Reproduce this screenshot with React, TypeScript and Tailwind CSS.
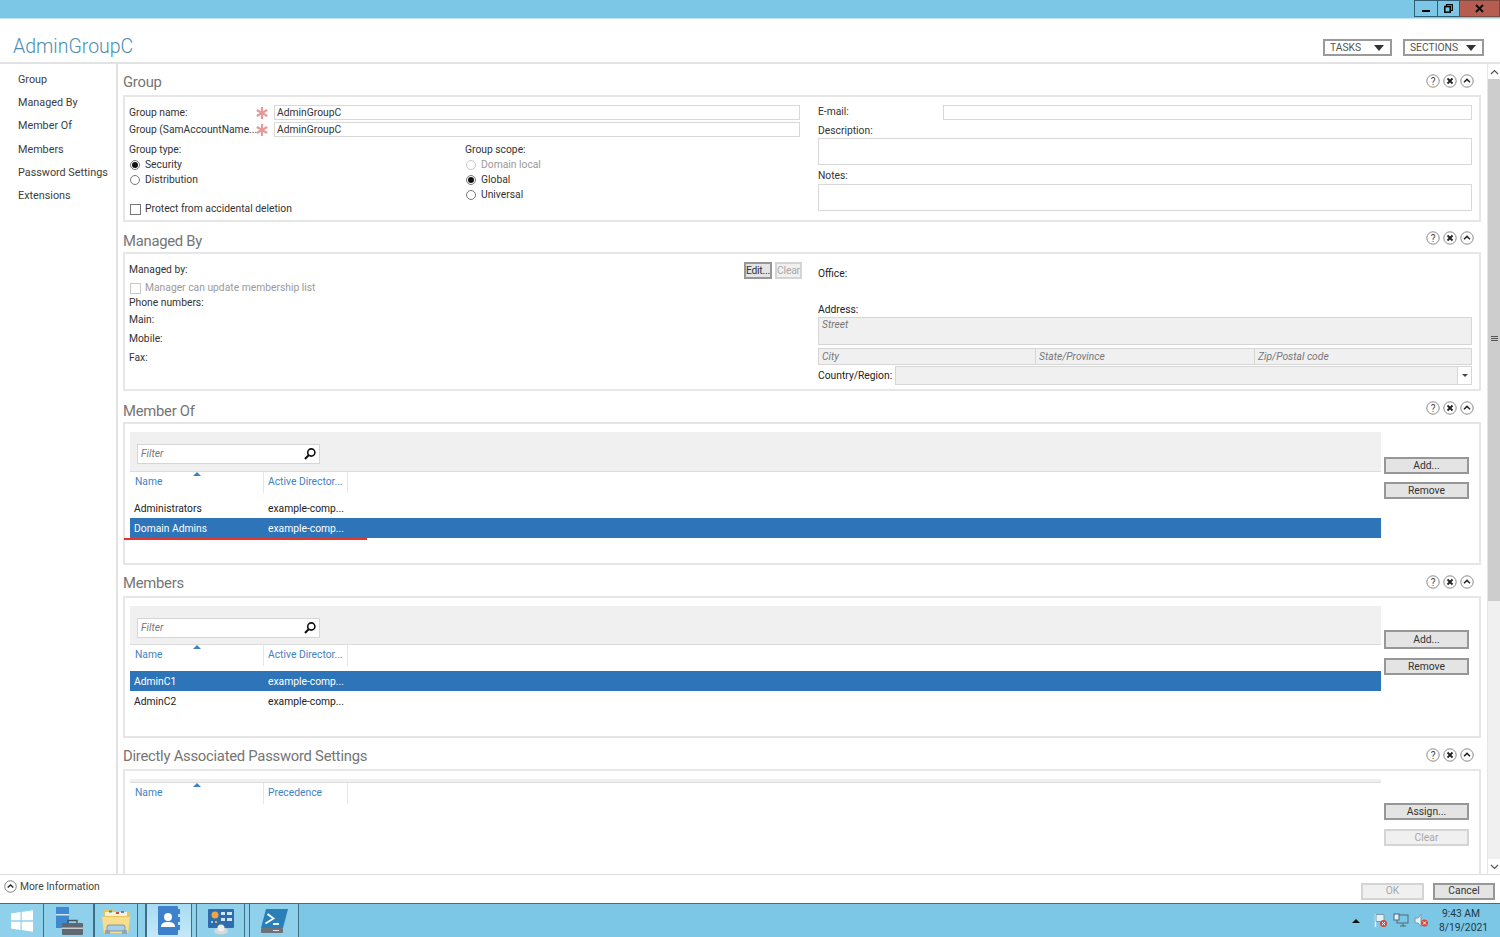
import React from "react";

const F = "font-['Roboto','Open_Sans',sans-serif]";

function CircleIcons() {
  return (
    <div className="flex gap-[3px] mr-[7px]">
      <svg width="14" height="14" viewBox="0 0 14 14"><circle cx="7" cy="7" r="6.2" fill="#fff" stroke="#8a8a8a" /><text x="7" y="10.500" fontSize="10" textAnchor="middle" fill="#444" fontFamily="Roboto">?</text></svg>
      <svg width="14" height="14" viewBox="0 0 14 14"><circle cx="7" cy="7" r="6.2" fill="#fff" stroke="#8a8a8a" /><path d="M4.500 4.500l5 5M9.500 4.500l-5 5" stroke="#222" strokeWidth="1.8" /></svg>
      <svg width="14" height="14" viewBox="0 0 14 14"><circle cx="7" cy="7" r="6.2" fill="#fff" stroke="#8a8a8a" /><path d="M4 8.200L7 5.400l3 2.800" stroke="#222" strokeWidth="1.5" fill="none" /></svg>
    </div>
  );
}

function Section({ title, h, children, gap, head, icons }: { title: string; h: string; children: React.ReactNode; gap: string; head: string; icons: string }) {
  return (
    <section className={gap}>
      <div className="h-[26px] flex items-center justify-between">
        <h2 className={`text-[14.8px] tracking-[-0.25px] leading-none text-[#757575] ${head}`}>{title}</h2>
        <div className={icons}><CircleIcons /></div>
      </div>
      <div className={`${h} border-2 border-[#e6e6e6] bg-white box-border`}>{children}</div>
    </section>
  );
}

function Req() {
  return (
    <svg width="12" height="12" viewBox="0 0 12 12" className="shrink-0">
      <path d="M6 0v12M0.800 3l10.400 6M11.200 3L0.800 9" stroke="#e59a9a" strokeWidth="2.2" />
    </svg>
  );
}

function Radio({ on, dis, label }: { on?: boolean; dis?: boolean; label: string }) {
  return (
    <div className={`h-[15px] flex items-center gap-[5px] ${dis ? "text-[#9a9a9a]" : ""}`}>
      <span className={`w-[10px] h-[10px] rounded-full border flex items-center justify-center bg-white ${dis ? "border-[#c8c8c8]" : "border-[#777]"}`}>
        {on && <span className="w-[6px] h-[6px] rounded-full bg-[#111]" />}
      </span>
      {label}
    </div>
  );
}

function Check({ label, dis }: { label: string; dis?: boolean }) {
  return (
    <div className={`flex items-center gap-[4px] ${dis ? "text-[#9a9a9a]" : ""}`}>
      <span className={`w-[11px] h-[11px] border bg-white ${dis ? "border-[#c8c8c8]" : "border-[#777]"}`} />
      {label}
    </div>
  );
}

function Btn({ label, className, dis }: { label: string; className: string; dis?: boolean }) {
  return (
    <div className={`flex items-center justify-center border-2 box-border whitespace-nowrap ${dis ? "border-[#d4d4d4] bg-[#f0f0f0] text-[#a8a8a8]" : "border-[#979797] bg-[#e4e4e4] text-[#333]"} ${className}`}>
      {label}
    </div>
  );
}

function Filter() {
  return (
    <div className="w-[183px] h-[20px] ml-[7px] border border-[#d6d6d6] bg-white flex items-center justify-between pl-[3px] pr-[2px] italic text-[#777]">
      Filter
      <svg width="14" height="14" viewBox="0 0 14 14"><circle cx="8.300" cy="5.500" r="3.600" fill="none" stroke="#111" strokeWidth="1.6" /><path d="M5.600 8.200L2 12" stroke="#111" strokeWidth="2" /></svg>
    </div>
  );
}

function ColHead({ a, b }: { a: string; b: string }) {
  return (
    <div className="flex h-[21px] text-[#3f82c4] whitespace-nowrap">
      <div className="relative w-[134px] pl-[5px] pb-[2px] flex items-center border-r border-[#e6e6e6]">
        {a}
        <span className="absolute left-[63px] top-0 w-0 h-0 border-x-[4px] border-x-transparent border-b-[4px] border-b-[#3f82c4]" />
      </div>
      <div className="w-[84px] pl-[4px] pb-[2px] flex items-center border-r border-[#e6e6e6]">{b}</div>
    </div>
  );
}

function Row({ name, sel }: { name: string; sel?: boolean }) {
  return (
    <div className={`flex h-[20px] items-center pt-[1px] ${sel ? "bg-[#2e74b8] text-white" : "text-[#222]"}`}>
      <span className="w-[138px] pl-[4px]">{name}</span>
      <span>example-comp...</span>
    </div>
  );
}

function Grid({ rows, sideTop, pad, toolH, add, rem, underline }: { rows: React.ReactNode; sideTop: string; pad: string; toolH: string; add: string; rem: string; underline?: boolean }) {
  return (
    <div className="flex h-full pt-[8px] pl-[5px]">
      <div className="relative w-[1251px]">
        <div className={`${toolH} bg-[#f0f0f0] border-b border-[#dcdcdc] flex items-center pt-[5px]`}>
          <Filter />
        </div>
        <ColHead a="Name" b="Active Director..." />
        <div className={pad}>{rows}</div>
        {underline && <div className="absolute left-[-6px] top-[106px] w-[243px] h-[2px] bg-[#e8352b]" />}
      </div>
      <div className={`ml-[3px] ${sideTop} flex flex-col`}>
        <Btn label="Add..." className={`w-[85px] ${add}`} />
        <Btn label="Remove" className={`w-[85px] ${rem}`} />
      </div>
    </div>
  );
}

function Input({ className, children }: { className: string; children?: React.ReactNode }) {
  return <div className={`border border-[#d8d8d8] bg-white box-border flex items-center pl-[2px] ${className}`}>{children}</div>;
}

function GreyCell({ label, className }: { label: string; className: string }) {
  return <div className={`h-[17px] bg-[#f0f0f0] border border-[#d6d6d6] box-border pl-[3px] flex items-center italic text-[#777] ${className}`}>{label}</div>;
}

function TaskSlot({ w, active, children }: { w: string; active?: boolean; children: React.ReactNode }) {
  return (
    <div className={`${w} h-full border-x border-[#3f6f86] flex items-center justify-center ${active ? "bg-gradient-to-b from-[#a9dcf2] to-[#c4e8f8]" : "bg-[#8fd0eb]"}`}>
      {children}
    </div>
  );
}

export default function App() {
  return (
    <div className={`${F} w-[1500px] h-[937px] overflow-hidden flex flex-col bg-white text-[10.3px] leading-[14px] text-[#333]`}>
      {/* title bar */}
      <div className="h-[19px] shrink-0 bg-[#7cc7e6] flex justify-end border-b border-[#bfe4f3]">
        <div className="w-[24px] h-[17px] bg-[#7cc7e6] border border-[#2f5d73] flex items-center justify-center">
          <span className="w-[8px] h-[2px] bg-black mt-[4px]" />
        </div>
        <div className="w-[22px] h-[17px] bg-[#7cc7e6] border-y border-r border-[#2f5d73] flex items-center justify-center">
          <svg width="9" height="9" viewBox="0 0 9 9"><path d="M2.500 2.500V.7h5.800v5.800H6.500" fill="none" stroke="#000" strokeWidth="1.2" /><rect x=".8" y="2.600" width="5.400" height="5.600" fill="none" stroke="#000" strokeWidth="1.5" /></svg>
        </div>
        <div className="w-[40px] h-[17px] bg-[#b65c50] border-y border-r border-[#7d4a42] flex items-center justify-center">
          <svg width="9" height="9" viewBox="0 0 9 9"><path d="M1 1l7 7M8 1L1 8" stroke="#111" strokeWidth="2" /></svg>
        </div>
      </div>

      {/* header */}
      <div className="h-[45px] shrink-0 flex items-end justify-between border-b-2 border-[#e2e2e2] pl-[13px] pr-[16px] pb-[2px]">
        <h1 className="text-[19.5px] leading-[26px] font-light text-[#4c8db0]">AdminGroupC</h1>
        <div className="flex gap-[11px] pb-[4px]">
          <div className="w-[69px] h-[17px] border-2 border-[#9a9a9a] box-border flex items-center justify-between pl-[5px] pr-[6px] text-[#555]">
            TASKS<span className="w-0 h-0 border-x-[5px] border-x-transparent border-t-[6px] border-t-[#333]" />
          </div>
          <div className="w-[81px] h-[17px] border-2 border-[#9a9a9a] box-border flex items-center justify-between pl-[5px] pr-[6px] text-[#555]">
            SECTIONS<span className="w-0 h-0 border-x-[5px] border-x-transparent border-t-[6px] border-t-[#333]" />
          </div>
        </div>
      </div>

      {/* body */}
      <div className="flex-1 min-h-0 flex">
        <nav className="w-[118px] shrink-0 border-r-2 border-[#e2e2e2] pl-[18px] pt-[4px] text-[10.8px] text-[#3d3d3d]">
          {["Group", "Managed By", "Member Of", "Members", "Password Settings", "Extensions"].map((s) => (
            <div key={s} className="h-[23.3px] flex items-center">{s}</div>
          ))}
        </nav>

        <main className="flex-1 min-w-0 overflow-hidden pl-[5px] pr-[6px] pt-[5px]">
          <Section gap="" head="mt-[1px]" icons="-mt-[3px]" title="Group" h="h-[127px]">
            <div className="flex pl-[4px] pt-[8px]">
              <div className="w-[671px]">
                <div className="flex items-center h-[15px]">
                  <span className="w-[127px]">Group name:</span><Req />
                  <Input className="ml-[6px] w-[526px] h-[15px]">AdminGroupC</Input>
                </div>
                <div className="flex items-center h-[15px] mt-[2px]">
                  <span className="w-[127px] whitespace-nowrap">Group (SamAccountName...</span><Req />
                  <Input className="ml-[6px] w-[526px] h-[15px]">AdminGroupC</Input>
                </div>
                <div className="flex mt-[5px]">
                  <div className="w-[336px]">
                    <div className="h-[15px] flex items-center">Group type:</div>
                    <div className="pl-[1px]">
                      <Radio on label="Security" />
                      <Radio label="Distribution" />
                    </div>
                    <div className="pl-[1px] mt-[15px]"><Check label="Protect from accidental deletion" /></div>
                  </div>
                  <div>
                    <div className="h-[15px] flex items-center">Group scope:</div>
                    <div className="pl-[1px]">
                      <Radio dis label="Domain local" />
                      <Radio on label="Global" />
                      <Radio label="Universal" />
                    </div>
                  </div>
                </div>
              </div>
              <div className="ml-[18px] w-[654px]">
                <div className="flex items-center h-[15px]">
                  <span className="w-[125px] -mt-[2px]">E-mail:</span>
                  <Input className="w-[529px] h-[15px]" />
                </div>
                <div className="mt-[3px] h-[15px] flex items-center">Description:</div>
                <Input className="h-[27px]" />
                <div className="mt-[2px] h-[17px] flex items-center">Notes:</div>
                <Input className="h-[27px]" />
              </div>
            </div>
          </Section>

          <Section gap="mt-[4px]" head="mt-[4px]" icons="-mt-[3px]" title="Managed By" h="h-[139px]">
            <div className="flex pl-[4px] pt-[8px]">
              <div className="w-[673px]">
                <div className="flex justify-between h-[18px]">
                  <span className="pt-[1px]">Managed by:</span>
                  <div className="flex gap-[3px]">
                    <Btn label="Edit..." className="w-[28px] h-[17px] tracking-[-0.2px]" />
                    <Btn dis label="Clear" className="w-[27px] h-[17px] border border-[#d0d0d0] tracking-[-0.2px]" />
                  </div>
                </div>
                <div className="pl-[1px] mt-[1px]"><Check dis label="Manager can update membership list" /></div>
                <div className="h-[15px] flex items-center">Phone numbers:</div>
                <div className="mt-[2px] h-[16px] flex items-center">Main:</div>
                <div className="mt-[3px] h-[16px] flex items-center">Mobile:</div>
                <div className="mt-[3px] h-[16px] flex items-center">Fax:</div>
              </div>
              <div className="ml-[16px] w-[654px]">
                <div className="mt-[4px] h-[15px] flex items-center text-[#222]">Office:</div>
                <div className="mt-[21px] h-[15px] flex items-center text-[#222]">Address:</div>
                <div className="h-[28px] bg-[#f0f0f0] border border-[#d6d6d6] box-border pl-[3px] italic text-[#777]">Street</div>
                <div className="flex mt-[3px]">
                  <GreyCell label="City" className="w-[218px]" />
                  <GreyCell label="State/Province" className="w-[219px] border-l-0" />
                  <GreyCell label="Zip/Postal code" className="w-[217px] border-l-0" />
                </div>
                <div className="flex items-center mt-[1px] h-[19px]">
                  <span className="w-[77px] text-[#222] whitespace-nowrap">Country/Region:</span>
                  <div className="flex-1 h-[19px] bg-[#f0f0f0] border border-[#d6d6d6] box-border flex justify-end">
                    <span className="w-[14px] bg-white border-l border-[#d6d6d6] flex items-center justify-center">
                      <span className="w-0 h-0 border-x-[3px] border-x-transparent border-t-[3px] border-t-[#444]" />
                    </span>
                  </div>
                </div>
              </div>
            </div>
          </Section>

          <Section gap="mt-[5px]" head="mt-[4px]" icons="-mt-[2px]" title="Member Of" h="h-[143px]">
            <Grid
              toolH="h-[40px]" pad="pt-[5px]" sideTop="pt-[25px]" add="h-[17px]" rem="h-[17px] mt-[8px]" underline
              rows={<><Row name="Administrators" /><Row sel name="Domain Admins" /></>}
            />
          </Section>

          <Section gap="mt-[5px]" head="mt-[1px]" icons="-mt-[3px]" title="Members" h="h-[142px]">
            <Grid
              toolH="h-[39px]" pad="pt-[5px]" sideTop="pt-[24px]" add="h-[19px]" rem="h-[17px] mt-[9px]"
              rows={<><Row sel name="AdminC1" /><Row name="AdminC2" /></>}
            />
          </Section>

          <Section gap="mt-[5px]" head="mt-[1px]" icons="-mt-[3px]" title="Directly Associated Password Settings" h="h-[110px]">
            <div className="flex h-full pt-[8px] pl-[5px]">
              <div className="w-[1251px]">
                <div className="h-[4px] bg-[#f0f0f0] border-b border-[#dcdcdc]" />
                <ColHead a="Name" b="Precedence" />
              </div>
              <div className="ml-[3px] pt-[24px] flex flex-col">
                <Btn label="Assign..." className="w-[85px] h-[17px]" />
                <Btn dis label="Clear" className="w-[85px] h-[17px] mt-[9px]" />
              </div>
            </div>
          </Section>
        </main>

        {/* scrollbar */}
        <div className="w-[13px] shrink-0 bg-[#f0f0f0] border-l border-[#e4e4e4] flex flex-col">
          <div className="h-[15px] bg-white flex items-center justify-center">
            <svg width="9" height="6" viewBox="0 0 9 6"><path d="M1 5l3.500-3.500L8 5" fill="none" stroke="#555" strokeWidth="1.2" /></svg>
          </div>
          <div className="h-[522px] bg-[#cdcdcd] flex flex-col items-center justify-center gap-[1px] pb-[4px]">
            <span className="w-[7px] h-[1px] bg-[#555]" />
            <span className="w-[7px] h-[1px] bg-[#555]" />
            <span className="w-[7px] h-[1px] bg-[#555]" />
          </div>
          <div className="flex-1" />
          <div className="h-[15px] bg-white flex items-center justify-center">
            <svg width="9" height="6" viewBox="0 0 9 6"><path d="M1 1l3.500 3.500L8 1" fill="none" stroke="#555" strokeWidth="1.2" /></svg>
          </div>
        </div>
      </div>

      {/* footer */}
      <div className="h-[29px] shrink-0 border-t border-[#dcdcdc] flex items-center justify-between pl-[4px] pr-[5px]">
        <div className="flex items-center gap-[3px] text-[#444] -mt-[5px]">
          <svg width="13" height="13" viewBox="0 0 14 14"><circle cx="7" cy="7" r="6.2" fill="#fff" stroke="#777" /><path d="M4 8.200L7 5.400l3 2.800" stroke="#222" strokeWidth="1.5" fill="none" /></svg>
          More Information
        </div>
        <div className="flex gap-[9px] mt-[4px]">
          <Btn dis label="OK" className="w-[63px] h-[17px]" />
          <Btn label="Cancel" className="w-[62px] h-[17px]" />
        </div>
      </div>

      {/* taskbar */}
      <div className="h-[34px] shrink-0 bg-[#7cc7e6] border-t border-[#3f6f86] flex items-stretch">
        <div className="w-[43px] bg-[#8fd0eb] flex items-center justify-center">
          <svg width="24" height="24" viewBox="0 0 24 24" fill="#fff"><path d="M1 4.500l9.500-1.400V11.300H1zM11.700 3L23 1.300V11.300H11.700zM1 12.700h9.500V21L1 19.600zM11.700 12.700H23V22.800L11.700 21.100z" /></svg>
        </div>
        <TaskSlot w="w-[51px]">
          <svg width="30" height="30" viewBox="0 0 30 30">
            <rect x="2" y="1" width="13" height="21" fill="#3d8ad0" /><rect x="2" y="8" width="13" height="1.500" fill="#cfe6f6" />
            <rect x="8" y="17" width="21" height="12" rx="1" fill="#5f6770" /><rect x="8" y="21.500" width="21" height="1.500" fill="#c8ccd0" />
            <path d="M14 17v-2.500h9V17" fill="none" stroke="#4c525a" strokeWidth="1.400" />
          </svg>
        </TaskSlot>
        <TaskSlot w="w-[44px]">
          <svg width="30" height="30" viewBox="0 0 30 30">
            <path d="M2 4h10l2 2h14v20H2z" fill="#e8c45e" /><rect x="4" y="6" width="22" height="4" fill="#f5f0d8" />
            <rect x="8" y="4.500" width="3" height="2" fill="#3fa34d" /><rect x="15" y="6" width="3" height="2" fill="#d24a3a" /><rect x="20" y="5" width="3" height="2" fill="#3d8ad0" />
            <path d="M1 11h28l-2 16H3z" fill="#f6de8e" /><rect x="6" y="19" width="18" height="6" rx="2" fill="#a8d0e8" stroke="#7e99a8" />
            <rect x="4" y="24" width="5" height="4" fill="#8ea5b2" /><rect x="21" y="24" width="5" height="4" fill="#8ea5b2" />
          </svg>
        </TaskSlot>
        <div className="w-[8px] bg-[#8fd0eb] border-r border-[#3f6f86]" />
        <TaskSlot w="w-[46px]" active>
          <svg width="26" height="31" viewBox="0 0 26 31">
            <rect x="2" y="1" width="20" height="29" rx="1" fill="#3d80cc" />
            <rect x="22" y="4" width="2" height="5" fill="#3d80cc" /><rect x="22" y="12" width="2" height="5" fill="#3d80cc" /><rect x="22" y="20" width="2" height="5" fill="#3d80cc" />
            <circle cx="12" cy="12" r="4" fill="#fff" /><path d="M5 22c0-4 3-5 7-5s7 1 7 5z" fill="#fff" />
          </svg>
        </TaskSlot>
        <div className="w-[4px] bg-[#8fd0eb]" />
        <TaskSlot w="w-[49px]">
          <svg width="30" height="28" viewBox="0 0 30 28">
            <rect x="2" y="2" width="26" height="19" rx="1" fill="#2f6cad" />
            <circle cx="9" cy="8" r="3.500" fill="#f0a63c" /><rect x="5" y="14" width="2" height="2" fill="#8fd0eb" /><rect x="9" y="14" width="2" height="2" fill="#f0a63c" />
            <rect x="15" y="5" width="4" height="3" fill="#cfe6f6" /><rect x="21" y="5" width="5" height="3" fill="#cfe6f6" /><rect x="15" y="11" width="4" height="3" fill="#cfe6f6" /><rect x="21" y="11" width="5" height="3" fill="#cfe6f6" />
            <ellipse cx="15" cy="24" rx="7" ry="3.500" fill="#d8d8d8" /><circle cx="15" cy="21" r="3.500" fill="#eeeeee" />
          </svg>
        </TaskSlot>
        <div className="w-[4px] bg-[#8fd0eb]" />
        <TaskSlot w="w-[50px]">
          <svg width="30" height="28" viewBox="0 0 30 28">
            <path d="M7 2h22l-5 19H2z" fill="#2b7fb8" /><path d="M8.500 7l6 4.500-8 5" fill="none" stroke="#fff" strokeWidth="1.800" /><path d="M14 17h6" stroke="#fff" strokeWidth="1.800" />
            <rect x="2" y="21" width="22" height="5" rx="1" fill="#6d737a" /><rect x="14" y="23" width="6" height="1" fill="#e0e0e0" />
          </svg>
        </TaskSlot>
        <div className="flex-1" />
        <div className="flex items-center pr-[17px] text-[#1d3a48]">
          <span className="w-0 h-0 border-x-[4px] border-x-transparent border-b-[4px] border-b-[#111] mr-[13px]" />
          <svg width="15" height="15" viewBox="0 0 15 15" className="mr-[5px]"><path d="M2.500 1v13" stroke="#eee" strokeWidth="1.500" /><path d="M3 1.500h8v7H3z" fill="#dff1f9" stroke="#7f9aa8" /><circle cx="10.500" cy="10.500" r="3.500" fill="#d9483b" /><path d="M9 9l3 3M12 9l-3 3" stroke="#fff" /></svg>
          <svg width="16" height="15" viewBox="0 0 16 15" className="mr-[5px]"><rect x="4" y="2" width="11" height="8" fill="none" stroke="#4c6a78" /><rect x="1" y="1" width="5" height="6" fill="#dff1f9" stroke="#4c6a78" /><path d="M7 13h6M10 10v3" stroke="#4c6a78" /></svg>
          <svg width="15" height="15" viewBox="0 0 15 15" className="mr-[10px]"><path d="M1 5h3l3-3.500v12L4 10H1z" fill="#dff1f9" stroke="#7f9aa8" /><circle cx="10.500" cy="10" r="3.500" fill="#d9483b" /><path d="M9 8.500l3 3M12 8.500l-3 3" stroke="#fff" /></svg>
          <div className="text-center leading-[14px] w-[44px] whitespace-nowrap"><div>9:43 AM</div><div>8/19/2021</div></div>
        </div>
      </div>
    </div>
  );
}
